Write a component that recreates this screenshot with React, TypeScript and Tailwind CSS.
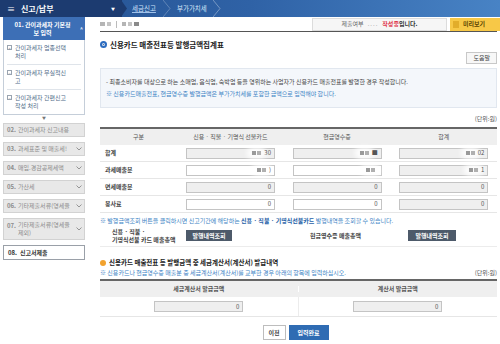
import type { ReactNode } from "react";

type Cell = { value: string; editable?: boolean; mask?: boolean };

const ROWS: { label: string; cells: Cell[] }[] = [
  {
    label: "합계",
    cells: [
      { value: "30", mask: true },
      { value: "■", mask: true },
      { value: "02", mask: true },
    ],
  },
  {
    label: "과세매출분",
    cells: [
      { value: ")", editable: true, mask: true },
      { value: "", editable: true, mask: true },
      { value: "1", mask: true },
    ],
  },
  {
    label: "면세매출분",
    cells: [{ value: "0" }, { value: "0" }, { value: "0" }],
  },
  {
    label: "봉사료",
    cells: [
      { value: "0", editable: true },
      { value: "0", editable: true },
      { value: "0" },
    ],
  },
];

const STEPS = [
  { no: "02.", label: "간이과세자 신고내용", arrow: false },
  { no: "03.", label: "과세표준 및 매출세!", arrow: true },
  { no: "04.", label: "매입.경감공제세액", arrow: true },
  { no: "05.", label: "가산세", arrow: true },
  { no: "06.", label: "기타제출서류(영세율", arrow: true },
];

function Chevron({ light = false }: { light?: boolean }) {
  return (
    <svg width="8" height="17" viewBox="0 0 8 17" className="shrink-0">
      <polyline
        points="0,0 7,8.5 0,17"
        fill="none"
        stroke={light ? "rgba(255,255,255,0.35)" : "rgba(255,255,255,0.25)"}
        strokeWidth="1"
      />
    </svg>
  );
}

function Caret() {
  return (
    <svg width="6" height="4" viewBox="0 0 6 4" className="shrink-0">
      <polyline points="0.5,0.5 3,3 5.5,0.5" fill="none" stroke="#8a8a8a" strokeWidth="0.9" />
    </svg>
  );
}

function TreeIcon({ plus }: { plus?: boolean }) {
  return (
    <span className="mt-[1px] flex h-[5px] w-[5px] shrink-0 items-center justify-center border border-[#9aa4b0] bg-white text-[4px] leading-none text-[#6b7785]">
      {plus ? "+" : "−"}
    </span>
  );
}

function Field({ cell }: { cell: Cell }) {
  return (
    <div
      className={`flex h-[11px] w-[89px] items-center justify-end gap-[2px] border border-[#c4c4c4] pr-[3px] text-[6px] leading-none text-[#555] ${
        cell.editable ? "bg-white" : "bg-[#efefef]"
      }`}
    >
      {cell.mask && (
        <span className="flex items-center gap-[1px] rounded-sm bg-white/80 px-[1px] shadow-[0_0_5px_4px_rgba(255,255,255,0.85)]">
          <span className="h-[4px] w-[4px] bg-[#9a9a9a]" />
          <span className="h-[4px] w-[4px] bg-[#b0b0b0]" />
        </span>
      )}
      <span>{cell.value}</span>
    </div>
  );
}

function Bullet({ color }: { color: "blue" | "orange" }) {
  return color === "blue" ? (
    <span className="flex h-[7px] w-[7px] shrink-0 items-center justify-center rounded-full bg-[#2b6cc0]">
      <span className="h-[3px] w-[3px] rounded-full border border-white/80 bg-[#1d4f95]" />
    </span>
  ) : (
    <span className="h-[6px] w-[6px] shrink-0 rounded-full bg-[#f2a22e]" />
  );
}

function Note({ children }: { children: ReactNode }) {
  return <p className="text-[6px] leading-[8px] text-[#3b82c4]">{children}</p>;
}

export default function App() {
  return (
    <div className="h-[344px] w-[500px] overflow-hidden bg-white font-['Noto_Sans_CJK_KR','Noto_Sans',sans-serif] text-[#333]">
      {/* top bar */}
      <header className="flex h-[17px] bg-gradient-to-r from-[#24508f] via-[#2f62a6] to-[#4883c5]">
        <div className="flex w-[122px] items-center bg-[#1c3b70] pl-[7px] text-white">
          <span className="mr-[6px] text-[8px] leading-none">≡</span>
          <span className="text-[8px] font-bold leading-none">신고/납부</span>
          <span className="ml-auto mr-[7px] text-[4px] leading-none">▼</span>
        </div>
        <svg width="6" height="17" viewBox="0 0 6 17" className="-ml-px shrink-0">
          <polygon points="0,0 6,8.5 0,17" fill="#1c3b70" />
        </svg>
        <div className="flex items-center pl-[5px] pr-[7px] text-[6.5px] leading-none text-[#cfe2fa] underline decoration-[#9fc1ea]">
          세금신고
        </div>
        <Chevron />
        <div className="flex items-center pl-[6px] pr-[6px] text-[6.5px] leading-none text-[#d6e6fa]">
          부가가치세
        </div>
        <Chevron light />
      </header>

      <div className="flex">
        {/* left steps */}
        <aside className="w-[88px] shrink-0 pl-[3px]">
          <div className="flex h-[23px] w-[82px] items-center bg-[#3d6fb6] pl-[2px] pr-[2px] text-[6px] font-bold leading-[8px] text-white">
            <span className="flex flex-1 flex-col items-center">
              <span className="whitespace-nowrap">01. 간이과세자 기본정</span>
              <span>보 입력</span>
            </span>
            <span className="text-[5px] leading-none">^</span>
          </div>
          <div className="w-[82px] border border-t-0 border-[#c5ced9] bg-white px-[3px] text-[6px] leading-[8px] text-[#4f6b88]">
            <div className="flex gap-[3px] border-b border-[#dfe4ea] py-[4px]">
              <TreeIcon plus />
              <span>
                간이과세자 업종선택
                <br />
                처리
              </span>
            </div>
            <div className="flex gap-[3px] border-b border-[#dfe4ea] py-[4px]">
              <TreeIcon />
              <span>
                간이과세자 무실적신
                <br />고
              </span>
            </div>
            <div className="flex gap-[3px] py-[4px]">
              <TreeIcon />
              <span>
                간이과세자 간편신고
                <br />
                작성 처리
              </span>
            </div>
          </div>
          <div className="flex w-[82px] justify-center py-[1px] text-[4px] leading-[5px] text-[#777]">▼</div>
          <div className="flex w-[82px] flex-col gap-[5px] pt-[1px]">
            {STEPS.map((s) => (
              <div
                key={s.no}
                className="flex h-[14px] items-center gap-[2px] border border-[#d2d2d2] bg-[#e8e8e8] pl-[3px] pr-[2px] text-[6px] leading-none text-[#8c8c8c]"
              >
                <span className="shrink-0 font-bold">{s.no}</span>
                <span className="flex-1 whitespace-nowrap">{s.label}</span>
                {s.arrow && <Caret />}
              </div>
            ))}
            <div className="flex h-[22px] items-center gap-[2px] border border-[#d2d2d2] bg-[#e8e8e8] pl-[3px] pr-[2px] text-[6px] leading-[8px] text-[#8c8c8c]">
              <span className="shrink-0 self-start pt-[3px] font-bold">07.</span>
              <span className="flex-1">
                기타제출서류(영세율
                <br />
                제외)
              </span>
              <Caret />
            </div>
            <div className="flex h-[15px] items-center gap-[3px] border border-[#9aa0a8] bg-white pl-[4px] text-[6px] font-bold leading-none text-[#333]">
              <span>08.</span>
              <span>신고서제출</span>
            </div>
          </div>
        </aside>

        {/* main */}
        <main className="min-w-0 flex-1 pl-[12px] pr-[3px]">
          <div className="mt-[1px] flex h-[12px] items-center">
            <div className="flex items-center gap-[2px]">
              <span className="h-[4px] w-[5px] bg-[#b5b5b5]" />
              <span className="h-[4px] w-[4px] bg-[#c4c4c4]" />
              <span className="mx-[3px] h-[7px] w-px bg-[#bbb]" />
              <span className="h-[4px] w-[4px] bg-[#b5b5b5]" />
              <span className="h-[4px] w-[4px] bg-[#c4c4c4]" />
              <span className="h-[4px] w-[5px] bg-[#8a8a8a]" />
            </div>
            <div className="ml-auto flex h-[13px] w-[135px] items-center justify-center gap-[4px] border border-[#dcdcdc] bg-[#f6f6f6] text-[6px] leading-none">
              <span className="text-[#666]">제출여부</span>
              <span className="tracking-[1px] text-[#999]">....</span>
              <span>
                <span className="font-bold text-[#e0354a]">작성중</span>
                <span className="font-bold text-[#333]">입니다.</span>
              </span>
            </div>
            <div className="ml-[3px] mr-[-3px] flex h-[13px] w-[50px] items-center gap-[4px] bg-[#f7c847] pl-[3px] text-[6px] font-bold leading-none text-[#5a4300]">
              <span className="h-[7px] w-[6px] bg-[#e2ad2a]" />
              <span>미리보기</span>
            </div>
          </div>
          <div className="mt-[1px] h-px bg-[#555]" />

          <div className="mt-[8px] flex h-[9px] items-center gap-[3px]">
            <Bullet color="blue" />
            <h1 className="text-[7.5px] font-bold leading-none text-[#222]">신용카드 매출전표등 발행금액집계표</h1>
          </div>

          <div className="mt-[3px] flex justify-end">
            <button className="flex h-[12px] items-center border border-[#c8c8c8] bg-[#f7f7f7] px-[6px] text-[6px] leading-none text-[#444]">
              도움말
            </button>
          </div>

          <div className="mt-[4px] border border-[#e1e7ef] bg-[#f4f7fb] px-[5px] py-[9px]">
            <p className="text-[6px] leading-[8px] text-[#444]">
              - 최종소비자를 대상으로 하는 소매업, 음식업, 숙박업 등을 영위하는 사업자가 신용카드 매출전표를 발행한 경우 작성합니다.
            </p>
            <p className="mt-[4px] text-[6px] leading-[8px] text-[#3b82c4]">
              ※ 신용카드매출전표, 현금영수증 발행금액은 부가가치세를 포함한 금액으로 입력해야 합니다.
            </p>
          </div>

          <p className="mt-[7px] text-right text-[6px] leading-[8px] text-[#555]">(단위:원)</p>

          <div className="mt-[4px] border-t-2 border-[#666]">
            <div className="grid h-[16px] grid-cols-[77px_1fr_1fr_1fr] items-center bg-[#efefef] text-center text-[6px] leading-none text-[#555]">
              <span>구분</span>
              <span>신용 · 직불 · 기명식 선불카드</span>
              <span>현금영수증</span>
              <span>합계</span>
            </div>
            {ROWS.map((r) => (
              <div
                key={r.label}
                className="grid h-[17px] grid-cols-[77px_1fr_1fr_1fr] items-center border-b border-[#e6e6e6]"
              >
                <span className="pl-[5px] text-[6px] font-bold leading-none text-[#444]">{r.label}</span>
                {r.cells.map((c, i) => (
                  <div key={i} className="pl-[9px]">
                    <Field cell={c} />
                  </div>
                ))}
              </div>
            ))}
          </div>

          <div className="mt-[4px]">
            <Note>
              ※ 발행금액조회 버튼을 클릭하시면 신고기간에 해당하는{" "}
              <b className="text-[#1f5fa8]">신용 · 직불 · 기명식선불카드</b> 발행내역을 조회할 수 있습니다.
            </Note>
          </div>

          <div className="flex h-[22px] items-center border-b border-[#ececec] text-[6px] leading-[8px] text-[#444]">
            <span className="w-[86px] pl-[12px] font-bold">
              신용 · 직불 ·
              <br />
              기명식선불 카드 매출총액
            </span>
            <span className="w-[124px]">
              <button className="flex h-[11px] w-[46px] items-center justify-center bg-[#4d5a6a] text-[6px] font-bold leading-none text-white">
                발행내역조회
              </button>
            </span>
            <span className="w-[98px] font-bold">현금영수증 매출총액</span>
            <button className="flex h-[11px] w-[48px] items-center justify-center bg-[#4d5a6a] text-[6px] font-bold leading-none text-white">
              발행내역조회
            </button>
          </div>

          <div className="mt-[11px] flex h-[9px] items-center gap-[3px]">
            <Bullet color="orange" />
            <h2 className="text-[6.5px] font-bold leading-none text-[#222]">
              신용카드 매출전표 등 발행금액 중 세금계산서(계산서) 발급내역
            </h2>
          </div>

          <div className="mt-[2px] flex items-center justify-between">
            <Note>※ 신용카드나 현금영수증 매출분 중 세금계산서(계산서)를 교부한 경우 아래의 항목에 입력하십시오.</Note>
            <span className="text-[6px] leading-[8px] text-[#555]">(단위:원)</span>
          </div>

          <div className="mt-[2px] border-t-2 border-[#666]">
            <div className="grid h-[16px] grid-cols-2 items-center bg-[#efefef] text-center text-[6px] font-bold leading-none text-[#555]">
              <span className="border-r border-white">세금계산서 발급금액</span>
              <span>계산서 발급금액</span>
            </div>
            <div className="grid h-[20px] grid-cols-2 items-center border-b border-[#e6e6e6]">
              <div className="flex h-full items-center justify-center border-r border-[#ececec]">
                <Field cell={{ value: "0" }} />
              </div>
              <div className="flex items-center justify-center">
                <Field cell={{ value: "0" }} />
              </div>
            </div>
          </div>

          <div className="mt-[8px] flex justify-center gap-[3px] pr-[6px]">
            <button className="flex h-[15px] w-[23px] items-center justify-center border border-[#bdbdbd] bg-white text-[6px] font-bold leading-none text-[#444]">
              이전
            </button>
            <button className="flex h-[15px] w-[40px] items-center justify-center bg-[#2f6cb3] text-[6px] font-bold leading-none text-white">
              입력완료
            </button>
          </div>
        </main>
      </div>
    </div>
  );
}
